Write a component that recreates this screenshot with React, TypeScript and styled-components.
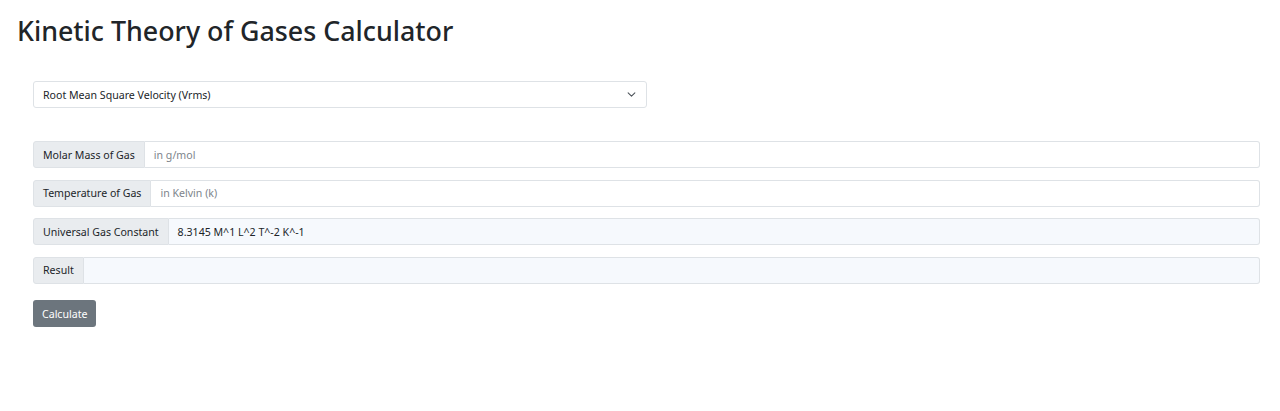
import React from "react";
import styled, { createGlobalStyle } from "styled-components";

const Global = createGlobalStyle`
  html, body { margin: 0; padding: 0; background: #fff; }
  body { font-family: "Noto Sans", "Open Sans", sans-serif; color: #212529; }
`;

const Page = styled.div`
  padding: 12px 20px 0 17px;
`;

const Title = styled.h1`
  margin: 0 0 31px 0;
  font-size: 26.8px;
  font-weight: 500;
  line-height: 38px;
  color: #212529;
`;

const Body = styled.div`
  padding-left: 16px;
  display: flex;
  flex-direction: column;
`;

const SelectBox = styled.div`
  width: 614px;
  height: 27px;
  box-sizing: border-box;
  border: 1px solid #dee2e6;
  border-radius: 3px;
  display: flex;
  align-items: center;
  justify-content: space-between;
  padding: 0 10px 0 9px;
  font-size: 10.6px;
  margin-bottom: 33px;
`;

const Group = styled.div`
  display: flex;
  height: 27px;
  box-sizing: border-box;
  margin-bottom: 11.5px;
`;

const Label = styled.span`
  display: flex;
  align-items: center;
  padding: 0 9px;
  background: #e9ecef;
  border: 1px solid #dee2e6;
  border-radius: 3px 0 0 3px;
  font-size: 10.6px;
  color: #212529;
  white-space: nowrap;
`;

const Field = styled.div<{ $readonly?: boolean; $placeholder?: boolean }>`
  flex: 1;
  display: flex;
  align-items: center;
  padding: 0 9px;
  border: 1px solid #dee2e6;
  border-left: none;
  border-radius: 0 3px 3px 0;
  background: ${(p) => (p.$readonly ? "#f6f9fd" : "#fff")};
  color: ${(p) => (p.$placeholder ? "#7d848b" : "#212529")};
  font-size: 10.6px;
`;

const Button = styled.button`
  align-self: flex-start;
  margin-top: 5px;
  height: 27px;
  padding: 0 9px;
  background: #6c757d;
  color: #fff;
  border: none;
  border-radius: 3px;
  font-family: inherit;
  font-size: 10.6px;
`;

export default function App() {
  return (
    <>
      <Global />
      <Page>
        <Title>Kinetic Theory of Gases Calculator</Title>
        <Body>
          <SelectBox>
            <span>Root Mean Square Velocity (Vrms)</span>
            <svg width="9" height="9" viewBox="0 0 16 16">
              <path d="M2 5l6 6 6-6" fill="none" stroke="#495057" strokeWidth="1.8" strokeLinecap="round" strokeLinejoin="round" />
            </svg>
          </SelectBox>
          <Group>
            <Label>Molar Mass of Gas</Label>
            <Field $placeholder>in g/mol</Field>
          </Group>
          <Group>
            <Label>Temperature of Gas</Label>
            <Field $placeholder>in Kelvin (k)</Field>
          </Group>
          <Group>
            <Label>Universal Gas Constant</Label>
            <Field $readonly>8.3145 M^1 L^2 T^-2 K^-1</Field>
          </Group>
          <Group>
            <Label>Result</Label>
            <Field $readonly></Field>
          </Group>
          <Button>Calculate</Button>
        </Body>
      </Page>
    </>
  );
}
